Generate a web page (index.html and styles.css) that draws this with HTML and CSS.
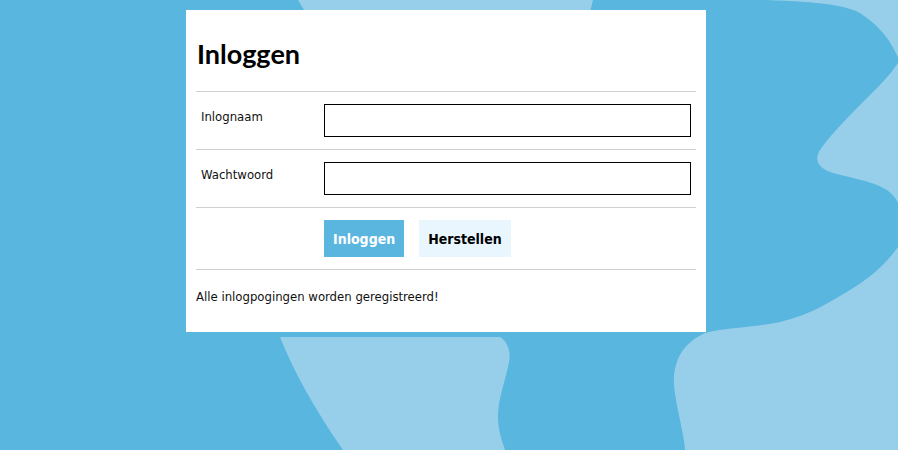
FILE: index.html
```html
<!DOCTYPE html>
<html lang="nl">

<head>
    <meta charset="UTF-8">
    <meta name="viewport" content="width=device-width, initial-scale=1.0">
    <title>Inloggen</title>
    <link rel="stylesheet" href="styles.css">
</head>

<body>
    <svg class="backdrop" viewBox="0 0 898 450" aria-hidden="true">
        <!-- light shape behind the card, top and bottom part -->
        <path d="M298 0 L593 0 L588 20 L310 20 Z" />
        <path d="M280 337 L500 337 C508 342 511 352 509 362 C506 380 497 400 498 420 C499 435 503 443 505 450 L343 450 C315 410 293 370 280 337 Z" />
        <!-- top right sliver -->
        <path d="M767 0 L898 0 L898 57 C892 45 885 30 860 13 C845 5 820 2 767 0 Z" />
        <!-- right edge notch -->
        <path d="M898 63 C890 75 880 85 870 95 C850 115 830 135 820 150 C814 160 818 168 833 173 C850 178 870 180 887 190 C892 194 896 198 898 203 Z" />
        <!-- bottom right blob -->
        <path d="M898 247 C885 265 870 278 850 290 C830 302 810 315 780 322 C750 328 720 328 705 333 C690 340 680 350 676 365 C671 380 676 400 680 420 C683 435 685 445 685 450 L898 450 Z" />
    </svg>

    <div class="login-box">
        <h1>Inloggen</h1>
        <form class="login-form" onsubmit="return false;">
            <div class="form-row">
                <label for="username">Inlognaam</label>
                <input type="text" id="username" name="username">
            </div>
            <div class="form-row">
                <label for="password">Wachtwoord</label>
                <input type="password" id="password" name="password">
            </div>
            <div class="form-row buttons">
                <span></span>
                <div class="button-group">
                    <button type="submit" class="primary">Inloggen</button>
                    <button type="reset" class="secondary">Herstellen</button>
                </div>
            </div>
        </form>
        <p class="notice">Alle inlogpogingen worden geregistreerd!</p>
    </div>
</body>

</html>
```

FILE: styles.css
```css
html,
body {
    height: 100%;
}

body {
    margin: 0;
    background-color: #58b6df;
    font-family: "DejaVu Sans Condensed", "DejaVu Sans", sans-serif;
    font-size: 13px;
    color: #111;
    overflow: hidden;
}

.backdrop {
    position: fixed;
    top: 0;
    left: 0;
    width: 898px;
    height: 450px;
    z-index: 0;
}

.backdrop path {
    fill: #97cfea;
}

.login-box {
    position: relative;
    z-index: 1;
    width: 500px;
    margin: 10px 0 0 calc(50% - 263px);
    padding: 10px 10px 25px;
    background-color: #fff;
}

h1 {
    font-family: Lato, "DejaVu Sans Condensed", sans-serif;
    font-size: 27px;
    font-weight: bold;
    margin: 18px 0 21px;
    padding-left: 1px;
    line-height: 32px;
    color: #000;
}

.login-form {
    border-top: 1px solid #cfcfcf;
}

.form-row {
    display: grid;
    grid-template-columns: 123px 1fr;
    padding: 12px 5px;
    border-bottom: 1px solid #cfcfcf;
}

.form-row label {
    padding-top: 5px;
    line-height: 16px;
}

.form-row input {
    height: 33px;
    box-sizing: border-box;
    border: 1px solid #000;
    border-radius: 0;
    padding: 4px 6px;
    font-family: inherit;
    font-size: 13px;
}

.button-group {
    display: flex;
    gap: 15px;
}

button {
    height: 37px;
    padding: 0 9px;
    border: none;
    font-family: inherit;
    font-size: 14px;
    font-weight: bold;
    cursor: pointer;
}

button.primary {
    background-color: #5ab6df;
    color: #fff;
}

button.secondary {
    background-color: #eaf6fe;
    color: #000;
}

.notice {
    margin: 17px 0 0;
    line-height: 20px;
}
```
